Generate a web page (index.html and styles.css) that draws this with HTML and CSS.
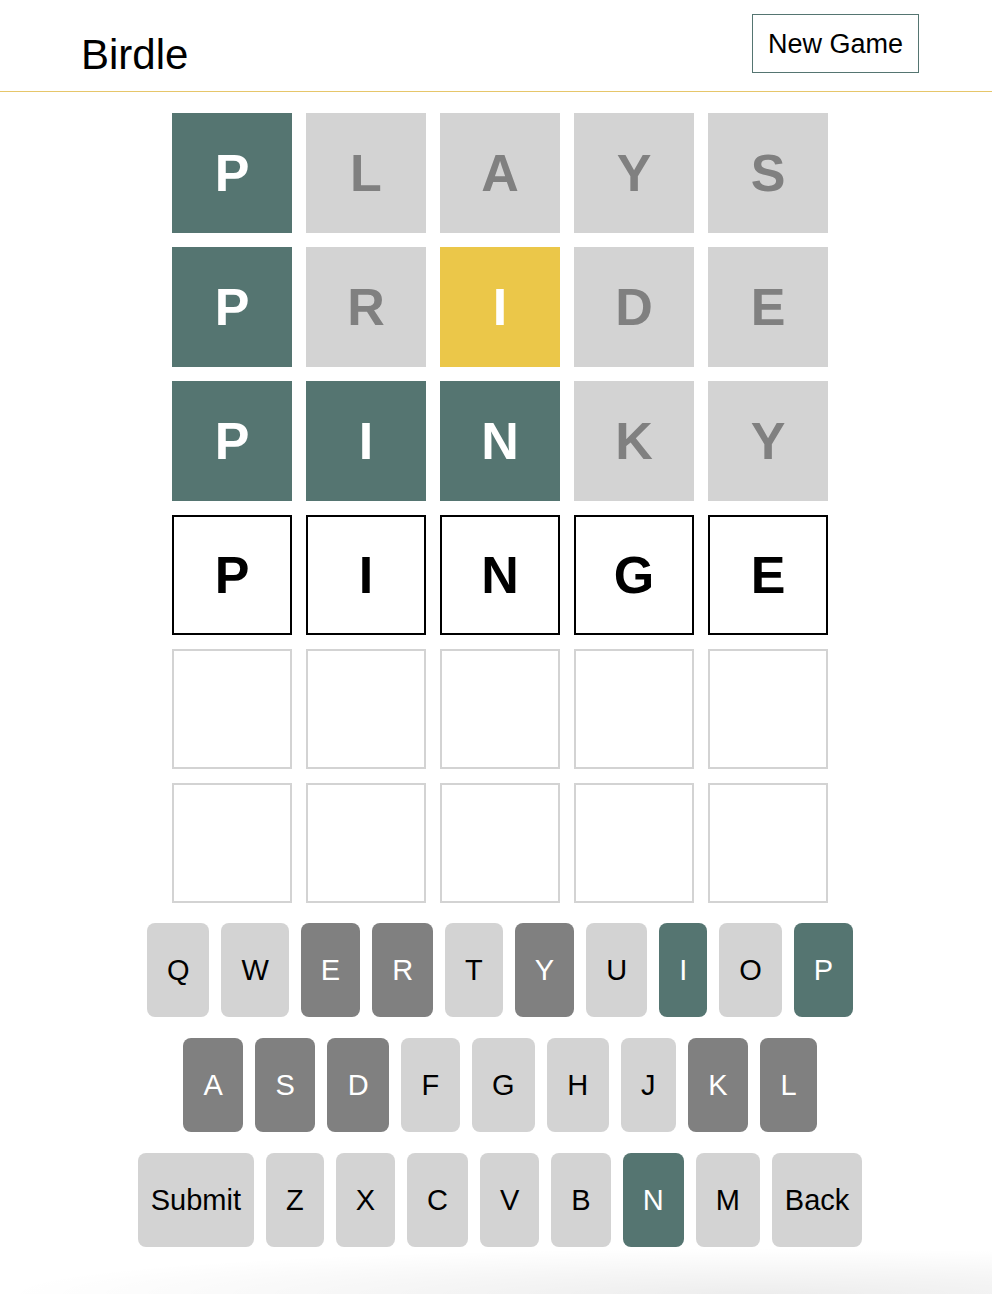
FILE: index.html
```html
<!DOCTYPE html>
<html lang="en">
<head>
<meta charset="utf-8">
<title>Birdle</title>
<link rel="stylesheet" href="styles.css">
</head>
<body>
<header class="topbar">
  <h1 class="title">Birdle</h1>
  <button class="new-game">New Game</button>
</header>
<main class="game">
  <div class="board">
    <div class="tile correct">P</div><div class="tile absent">L</div><div class="tile absent">A</div><div class="tile absent">Y</div><div class="tile absent">S</div>
    <div class="tile correct">P</div><div class="tile absent">R</div><div class="tile present">I</div><div class="tile absent">D</div><div class="tile absent">E</div>
    <div class="tile correct">P</div><div class="tile correct">I</div><div class="tile correct">N</div><div class="tile absent">K</div><div class="tile absent">Y</div>
    <div class="tile active">P</div><div class="tile active">I</div><div class="tile active">N</div><div class="tile active">G</div><div class="tile active">E</div>
    <div class="tile empty"></div><div class="tile empty"></div><div class="tile empty"></div><div class="tile empty"></div><div class="tile empty"></div>
    <div class="tile empty"></div><div class="tile empty"></div><div class="tile empty"></div><div class="tile empty"></div><div class="tile empty"></div>
  </div>
  <div class="keyboard">
    <div class="krow">
      <button class="key">Q</button><button class="key">W</button><button class="key used">E</button><button class="key used">R</button><button class="key">T</button><button class="key used">Y</button><button class="key">U</button><button class="key hit">I</button><button class="key">O</button><button class="key hit">P</button>
    </div>
    <div class="krow mid">
      <button class="key used">A</button><button class="key used">S</button><button class="key used">D</button><button class="key">F</button><button class="key">G</button><button class="key">H</button><button class="key">J</button><button class="key used">K</button><button class="key used">L</button>
    </div>
    <div class="krow">
      <button class="key wide">Submit</button><button class="key">Z</button><button class="key">X</button><button class="key">C</button><button class="key">V</button><button class="key">B</button><button class="key hit">N</button><button class="key">M</button><button class="key wide">Back</button>
    </div>
  </div>
</main>
</body>
</html>
```
FILE: styles.css
```css
html {
  min-height: 100%;
  background-color: #fff;
  background-image: radial-gradient(ellipse 760px 46px at 760px 100%, rgba(0,0,0,0.07), rgba(0,0,0,0) 100%);
  background-repeat: no-repeat;
}
body {
  margin: 0;
  font-family: "Liberation Sans", Arial, sans-serif;
  color: #000;
}
.topbar {
  box-sizing: border-box;
  height: 92px;
  border-bottom: 1px solid #e6c66a;
  display: flex;
  justify-content: space-between;
  align-items: flex-start;
  padding: 0 73px 0 81px;
}
.title {
  margin: 34px 0 0;
  font-size: 42px;
  line-height: 42px;
  font-weight: normal;
}
.new-game {
  margin-top: 14px;
  box-sizing: border-box;
  height: 59px;
  padding: 16px 15px 14px;
  border: 1px solid #557571;
  background: #fff;
  font-family: "Liberation Sans", Arial, sans-serif;
  font-size: 27px;
  line-height: 27px;
  color: #000;
}
.game {
  padding-left: 8px;
  display: flex;
  flex-direction: column;
  align-items: center;
}
.board {
  margin-top: 21px;
  display: grid;
  grid-template-columns: repeat(5, 120px);
  grid-auto-rows: 120px;
  gap: 14px;
}
.tile {
  box-sizing: border-box;
  display: flex;
  align-items: center;
  justify-content: center;
  font-size: 52px;
  font-weight: bold;
}
.correct { background: #557571; color: #fff; }
.present { background: #ebc749; color: #fff; }
.absent { background: #d3d3d3; color: #808080; }
.active { border: 2px solid #000; color: #000; }
.empty { border: 2px solid #d3d3d3; }
.keyboard {
  margin-top: 20px;
  display: flex;
  flex-direction: column;
  gap: 21px;
}
.krow {
  display: flex;
  justify-content: center;
  gap: 12px;
}
.key {
  height: 94px;
  padding: 0 20px;
  border: none;
  border-radius: 8px;
  background: #d3d3d3;
  color: #000;
  font-family: "Liberation Sans", Arial, sans-serif;
  font-size: 29px;
  line-height: 1;
}
.krow.mid .key { padding: 0 20.4px; }
.key.wide { padding: 0 13px; }
.key.used { background: #808080; color: #fff; }
.key.hit { background: #557571; color: #fff; }
```
